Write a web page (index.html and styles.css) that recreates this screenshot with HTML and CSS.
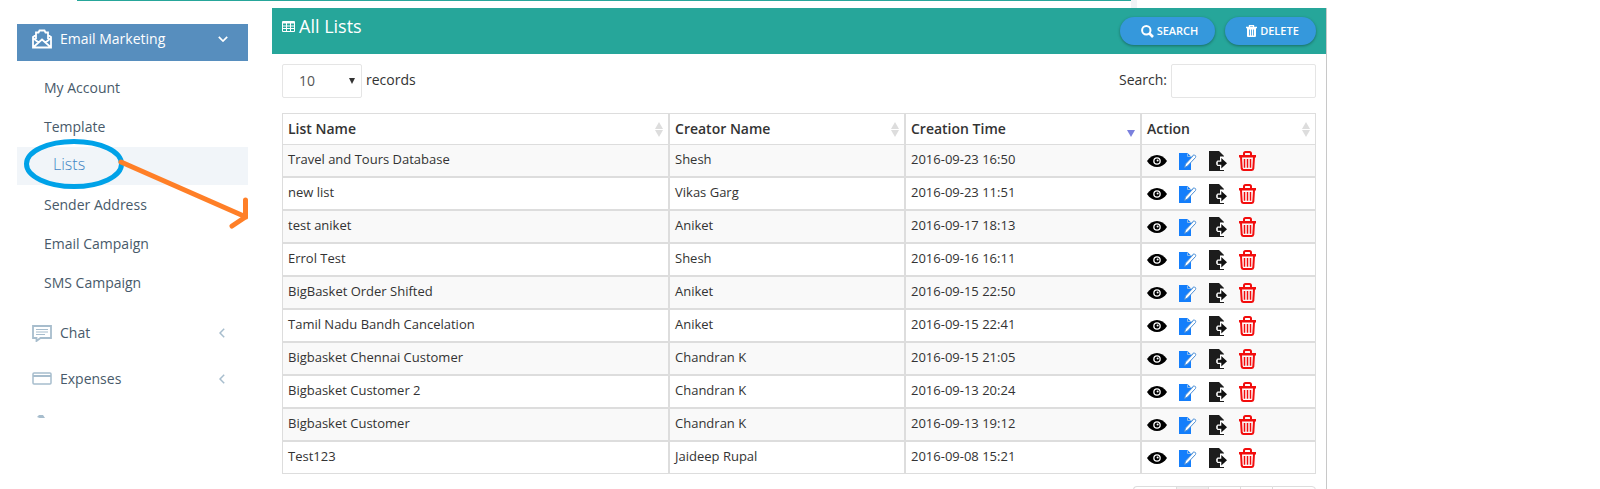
FILE: index.html
```html
<!DOCTYPE html>
<html lang="en">
<head>
<meta charset="utf-8">
<title>All Lists</title>
<link rel="stylesheet" href="styles.css">
</head>
<body>
<svg class="defs" aria-hidden="true">
  <symbol id="eye" viewBox="0 0 20 12"><path d="M0 6C5-2 15-2 20 6C15 14 5 14 0 6Z" fill="#000"/><circle cx="10" cy="6" r="3.800" fill="#fff"/><circle cx="10" cy="6" r="2.500" fill="#000"/><circle cx="10.600" cy="5.400" r="1" fill="#fff"/></symbol>
  <symbol id="edit" viewBox="0 0 18 18"><path d="M0 1H8.500L12 4.500V18H0Z" fill="#147efb"/><path d="M5.500 15.500L6.500 12L14 4C15 2.500 17.500 3 16.500 5.500L8.500 14Z" fill="#fff" stroke="#4d8fd6" stroke-width="1"/><path d="M8.500 1.500V4.500H12M12 5L15 2.500" fill="none" stroke="#8dbbe8"/></symbol>
  <symbol id="export" viewBox="0 0 18 20"><path d="M0 0H10L15 5V20H0Z" fill="#1c1c1c"/><path d="M15 5.500H11V9.500H8.500L7.200 11V13.500L8.500 15H11V19H15Z" fill="#fff"/><path d="M8.800 10.800H12.300V7L18 12.300L12.300 17.500V13.800H8.800Z" fill="#111"/></symbol>
  <symbol id="trash" viewBox="0 0 17 20"><path d="M5 4V2.500Q5 1 6.500 1H10.500Q12 1 12 2.500V4" fill="none" stroke="#f20d0d" stroke-width="2"/><path d="M0 4H17V6.500H0Z" fill="#f20d0d"/><path d="M2 6L2.700 17.500Q3 19 4.500 19H12.500Q14 19 14.300 17.500L15 6" fill="none" stroke="#f20d0d" stroke-width="2"/><path d="M5.500 8V16.800M8.500 8V16.800M11.500 8V16.800" fill="none" stroke="#f20d0d" stroke-width="1.500"/></symbol>
</svg>
<div class="strip"><span class="strip-line"></span><span class="strip-edge"></span></div>
<div class="page">
  <nav class="sidebar">
    <a class="group active" href="#">
      <svg width="20" height="20" viewBox="0 0 20 20" fill="none" stroke="#fff" stroke-width="1.800"><path d="M4 10V3.500H6.500L7.500 1.500H12.500L13.500 3.500H16V10M4 6L1 8V18.500H19V8L16 6M1 9L6.500 13.500M19 9L13.500 13.500M1.500 18L10 10.500L18.500 18"/></svg>
      <span>Email Marketing</span>
      <svg class="caret" width="10" height="6" viewBox="0 0 10 6" fill="none" stroke="#fff" stroke-width="1.700"><path d="M.8.800L5 5L9.200.800"/></svg>
    </a>
    <div class="submenu">
      <a href="#">My Account</a>
      <a href="#">Template</a>
      <a class="current" href="#">Lists</a>
      <a href="#">Sender Address</a>
      <a href="#">Email Campaign</a>
      <a href="#">SMS Campaign</a>
      <svg class="marker" viewBox="0 0 231 100" width="231" height="100" fill="none"><ellipse cx="57" cy="29" rx="47.500" ry="22.500" stroke="#00a2e8" stroke-width="5"/><path d="M104 27L229 82M228.500 65V82L215 91" stroke="#ff7f27" stroke-width="5" stroke-linecap="round"/></svg>
    </div>
    <a class="group" href="#">
      <svg width="20" height="18" viewBox="0 0 20 18" fill="none" stroke="#a7bdcd" stroke-width="1.800"><path d="M1 2H19V14H8.500L4.500 17V14H1Z"/><path d="M4 5.500H16M4 8H16M4 10.500H13" stroke-width="1"/></svg>
      <span>Chat</span>
      <svg class="caret" width="6" height="10" viewBox="0 0 6 10" fill="none" stroke="#a7bdcd" stroke-width="1.500"><path d="M5.200.800L1 5L5.200 9.200"/></svg>
    </a>
    <a class="group" href="#">
      <svg width="20" height="18" viewBox="0 0 20 18" fill="none" stroke="#a7bdcd"><rect x="1" y="3" width="18" height="11" rx="1" stroke-width="1.500"/><path d="M1 6H19" stroke-width="2"/></svg>
      <span>Expenses</span>
      <svg class="caret" width="6" height="10" viewBox="0 0 6 10" fill="none" stroke="#a7bdcd" stroke-width="1.500"><path d="M5.200.800L1 5L5.200 9.200"/></svg>
    </a>
    <svg class="peek" width="8" height="3" viewBox="0 0 8 3"><path d="M0 2L2 0H6L8 3H2.500Z" fill="#a7bdcd"/></svg>
  </nav>
  <main class="panel">
    <header class="panel-head">
      <h1><svg width="13" height="11" viewBox="0 0 13 11"><rect width="13" height="11" rx="1" fill="#fff"/><path d="M1 2.500H4V4.500H1ZM5 2.500H8V4.500H5ZM9 2.500H12V4.500H9ZM1 5.500H4V7H1ZM5 5.500H8V7H5ZM9 5.500H12V7H9ZM1 8H4V10H1ZM5 8H8V10H5ZM9 8H12V10H9Z" fill="#26a69a"/></svg>All Lists</h1>
      <div class="buttons">
        <button class="pill search" type="button"><svg width="13" height="13" viewBox="0 0 13 13" fill="none" stroke="#fff"><circle cx="5.300" cy="5.300" r="4.200" stroke-width="2"/><path d="M8.500 8.500L12 12" stroke-width="2.600"/></svg>SEARCH</button>
        <button class="pill" type="button"><svg width="11" height="12" viewBox="0 0 11 12"><path d="M3.500 2V.700H7.500V2" fill="none" stroke="#fff" stroke-width="1.300"/><path d="M0 1.800H11V3.300H0ZM1 3.300H10V11Q10 12 9 12H2Q1 12 1 11Z" fill="#fff"/><path d="M3.500 4.500V10.500M5.500 4.500V10.500M7.500 4.500V10.500" stroke="#3598dc" stroke-width=".8"/></svg>DELETE</button>
      </div>
    </header>
    <div class="panel-body">
      <div class="controls">
        <label><span class="select-wrap"><select><option>10</option></select></span>records</label>
        <label>Search:<input type="text"></label>
      </div>
      <table>
        <thead><tr>
          <th class="c-list"><div>List Name<i class="sort"></i></div></th>
          <th class="c-mid"><div>Creator Name<i class="sort"></i></div></th>
          <th class="c-mid"><div>Creation Time<i class="sort desc"></i></div></th>
          <th><div>Action<i class="sort"></i></div></th>
        </tr></thead>
        <tbody id="rows"></tbody>
      </table>
      <div class="pager"><button type="button" aria-label="First"></button><button class="on" type="button" aria-label="Page 1"></button><button type="button" aria-label="Page 2"></button><button type="button" aria-label="Page 3"></button><button type="button" aria-label="Last"></button></div>
    </div>
  </main>
</div>
<script src="app.js"></script>
</body>
</html>
```
FILE: styles.css
```css
* { box-sizing: border-box; }
body { margin: 0; height: 100vh; overflow: hidden; background: #fff; color: #333; font: 14px/20px "Open Sans", sans-serif; }
a { color: inherit; text-decoration: none; }
button, input, select { font: inherit; }
.defs { display: none; }
.strip { display: flex; height: 8px; padding-left: 77px; }
.strip-line { width: 69.2%; height: 1px; background: #26a69a; }
.strip-edge { width: 6px; background: #f1f3f6; }
.page { display: grid; grid-template-columns: 231px 1079fr 273fr; padding-left: 17px; }
.sidebar { margin-top: 16px; color: #485a6a; }

.group { display: flex; align-items: center; height: 46px; padding: 0 19px 0 15px; gap: 8px; }
.group .caret { margin-left: auto; margin-right: 4px; }
.group.active { height: 37px; padding-bottom: 8px; background: #578ebe; color: #fff; }
.group.active .caret { margin-right: 1px; }
.submenu { position: relative; padding: 8px 0 7px; }
.submenu a { display: block; height: 39px; padding: 9px 27px; }
.submenu .current { height: 38px; margin-bottom: 1px; padding: 6px 36px; background: #f1f5f9; color: #4385c4; font-size: 16px; font-weight: 300; line-height: 22px; }
.marker { position: absolute; left: 0; top: 74px; pointer-events: none; }
.peek { display: block; margin: 13px 0 0 20px; }

.panel { height: calc(100vh - 8px); margin-left: 24px; overflow: hidden; border-right: 1px solid #c8c8c8; }
.panel-head { display: flex; justify-content: space-between; height: 46px; padding: 0 10px; background: #26a69a; }
h1 { display: flex; align-items: center; gap: 4px; height: 36px; margin: 0; color: #fff; font-size: 18px; font-weight: 400; line-height: 24px; }
.buttons { display: flex; gap: 10px; padding-top: 9px; }
.pill { display: flex; align-items: center; justify-content: center; gap: 3px; width: 91px; height: 28px; padding: 0 0 0 4px; border: 0; border-radius: 14px; background: #3598dc; box-shadow: 0 1px 3px rgba(0, 0, 0, .35); color: #fff; font-size: 11px; font-weight: 600; line-height: 18px; }
.pill.search { width: 95px; }
.panel-body { padding: 10px; }
.controls { display: flex; justify-content: space-between; }
.controls label { display: flex; gap: 4px; height: 34px; line-height: 32px; }
.select-wrap { position: relative; }
.select-wrap::after { content: ""; position: absolute; right: 7px; top: 14px; border: 3px solid transparent; border-top: 6px solid #333; border-bottom: 0; }
select { appearance: none; display: block; width: 80px; height: 34px; padding: 0 16px; border: 1px solid #e5e5e5; border-radius: 2px; background: #fff; color: #555; }
input { width: 145px; height: 34px; padding: 6px 12px; border: 1px solid #e5e5e5; border-radius: 2px; }

table { width: 100%; margin-top: 15px; border-collapse: separate; border-spacing: 0; table-layout: fixed; }
.c-list { width: 37.430%; }
.c-mid { width: 22.820%; }
th, td { border: 1px solid #ddd; padding: 0 5px; text-align: left; vertical-align: top; }
th { height: 31px; border-bottom: 0; font-weight: 600; }
th div { display: flex; justify-content: space-between; align-items: center; height: 30px; }
td { height: 33px; padding-top: 5px; font-size: 13px; line-height: 18px; }
tbody tr:nth-child(odd) { background: #f9f9f9; }
.sort { display: grid; gap: 1px; margin-top: 1px; }
.sort::before, .sort::after { content: ""; border: 4px solid transparent; }
.sort::before { border-top: 0; border-bottom: 7px solid #ddd; }
.sort::after { border-bottom: 0; border-top: 7px solid #ddd; }
.sort.desc::before { border-bottom-color: transparent; }
.sort.desc::after { border-top-color: #7a80dd; }
.actions { display: flex; align-items: center; gap: 12px; padding-top: 1px; }
.actions button { display: flex; padding: 0; border: 0; background: none; }
.pager { display: flex; justify-content: flex-end; margin-top: 12px; }
.pager button { width: 32px; height: 32px; padding: 0; border: 1px solid #ddd; border-right: 0; background: #fff; }
.pager button:first-child { width: 43px; border-radius: 4px 0 0 4px; }
.pager button:last-child { width: 44px; border-right: 1px solid #ddd; border-radius: 0 4px 4px 0; }
.pager .on { background: #eee; }
```
FILE: app.js
```js
const rows = [
  ["Travel and Tours Database", "Shesh", "2016-09-23 16:50"],
  ["new list", "Vikas Garg", "2016-09-23 11:51"],
  ["test aniket", "Aniket", "2016-09-17 18:13"],
  ["Errol Test", "Shesh", "2016-09-16 16:11"],
  ["BigBasket Order Shifted", "Aniket", "2016-09-15 22:50"],
  ["Tamil Nadu Bandh Cancelation", "Aniket", "2016-09-15 22:41"],
  ["Bigbasket Chennai Customer", "Chandran K", "2016-09-15 21:05"],
  ["Bigbasket Customer 2", "Chandran K", "2016-09-13 20:24"],
  ["Bigbasket Customer", "Chandran K", "2016-09-13 19:12"],
  ["Test123", "Jaideep Rupal", "2016-09-08 15:21"]
];
const icons = [["eye", "View", 20, 12], ["edit", "Edit", 18, 18], ["export", "Export", 18, 20], ["trash", "Delete", 17, 20]];
const actions = icons.map(([id, label, w, h]) =>
  `<button type="button" aria-label="${label}"><svg width="${w}" height="${h}"><use href="#${id}"/></svg></button>`).join("");
document.getElementById("rows").innerHTML = rows.map(r =>
  `<tr>${r.map(c => `<td>${c}</td>`).join("")}<td><div class="actions">${actions}</div></td></tr>`).join("");
```
